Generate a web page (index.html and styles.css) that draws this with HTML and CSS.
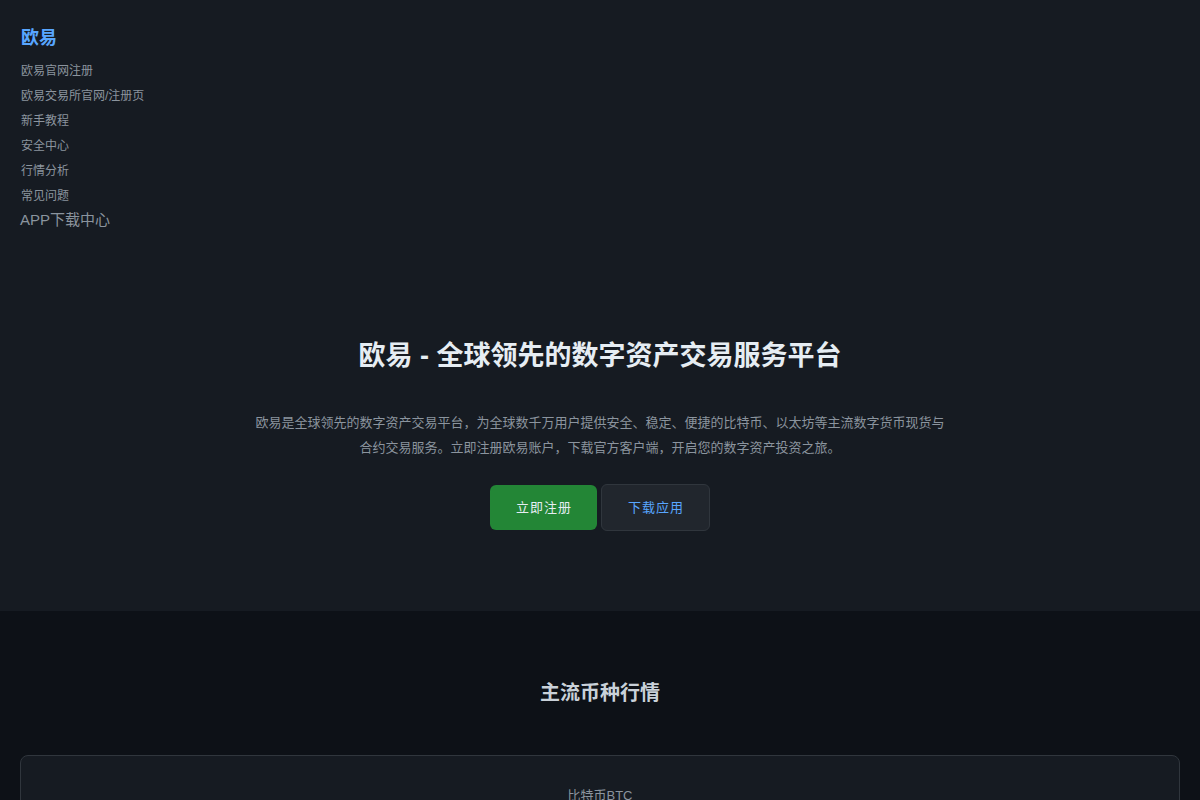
FILE: index.html
```html
<!DOCTYPE html>
<html lang="zh-CN">
<head>
  <meta charset="UTF-8">
  <meta name="viewport" content="width=device-width, initial-scale=1.0">
  <title>欧易 - 全球领先的数字资产交易服务平台</title>
  <link rel="stylesheet" href="styles.css">
</head>
<body>
  <header class="top">
    <nav class="nav">
      <a class="logo" href="#">欧易</a>
      <ul class="nav-links">
        <li><a href="#">欧易官网注册</a></li>
        <li><a href="#">欧易交易所官网/注册页</a></li>
        <li><a href="#">新手教程</a></li>
        <li><a href="#">安全中心</a></li>
        <li><a href="#">行情分析</a></li>
        <li><a href="#">常见问题</a></li>
        <li class="app-item"><a href="#">APP下载中心</a></li>
      </ul>
    </nav>

    <section class="hero">
      <h1>欧易 - 全球领先的数字资产交易服务平台</h1>
      <p>欧易是全球领先的数字资产交易平台，为全球数千万用户提供安全、稳定、便捷的比特币、以太坊等主流数字货币现货与合约交易服务。立即注册欧易账户，下载官方客户端，开启您的数字资产投资之旅。</p>
      <div class="hero-buttons">
        <a href="#" class="btn btn-primary">立即注册</a>
        <a href="#" class="btn btn-secondary">下载应用</a>
      </div>
    </section>
  </header>

  <section class="markets">
    <h2>主流币种行情</h2>
    <div class="market-card">
      <div class="coin">比特币BTC</div>
    </div>
  </section>
</body>
</html>
```

FILE: styles.css
```css
body {
  margin: 0;
  font-family: 'Liberation Sans', 'Noto Sans CJK SC', sans-serif;
  background-color: #0d1117;
  color: #c9d1d9;
}
a {
  text-decoration: none;
}
.top {
  background-color: #161b22;
  padding-bottom: 80px;
}
.nav {
  padding: 24px 20px 0;
}
.logo {
  display: block;
  font-size: 18px;
  line-height: 28px;
  font-weight: bold;
  color: #58a6ff;
  margin-bottom: 5px;
  padding-left: 1px;
}
.nav-links {
  list-style: none;
  margin: 0;
  padding: 0;
}
.nav-links li {
  box-sizing: border-box;
  height: 25px;
  padding-top: 4px;
  line-height: 21px;
  font-size: 12px;
}
.nav-links a {
  color: #8b949e;
  padding-left: 1px;
}
.nav-links .app-item {
  padding-top: 0;
  line-height: 25px;
  font-size: 15px;
}
.nav-links .app-item a {
  padding-left: 0;
}
.hero {
  text-align: center;
  padding: 106px 20px 0;
}
.hero h1 {
  margin: 0;
  font-size: 27px;
  line-height: 36px;
  font-weight: bold;
  color: #e6edf3;
}
.hero p {
  max-width: 690px;
  margin: 36px auto 24px;
  font-size: 13px;
  line-height: 25px;
  color: #8b949e;
}
.hero-buttons {
  font-size: 0;
}
.btn {
  display: inline-block;
  vertical-align: middle;
  font-size: 13px;
  line-height: 17px;
  letter-spacing: 1px;
  padding: 14px 25px 14px 26px;
  border-radius: 6px;
  margin: 0 2px;
}
.btn-primary {
  background-color: #238636;
  color: #e6edf3;
}
.btn-secondary {
  background-color: #21262d;
  border: 1px solid #30363d;
  color: #58a6ff;
}
.markets {
  padding: 67px 20px 0;
}
.markets h2 {
  margin: 0 0 47px;
  text-align: center;
  font-size: 20px;
  line-height: 30px;
  font-weight: 600;
  color: #c9d1d9;
}
.market-card {
  background-color: #161b22;
  border: 1px solid #30363d;
  border-radius: 8px;
  padding: 30px 20px;
  text-align: center;
}
.coin {
  font-size: 13px;
  line-height: 20px;
  color: #8b949e;
}
```
